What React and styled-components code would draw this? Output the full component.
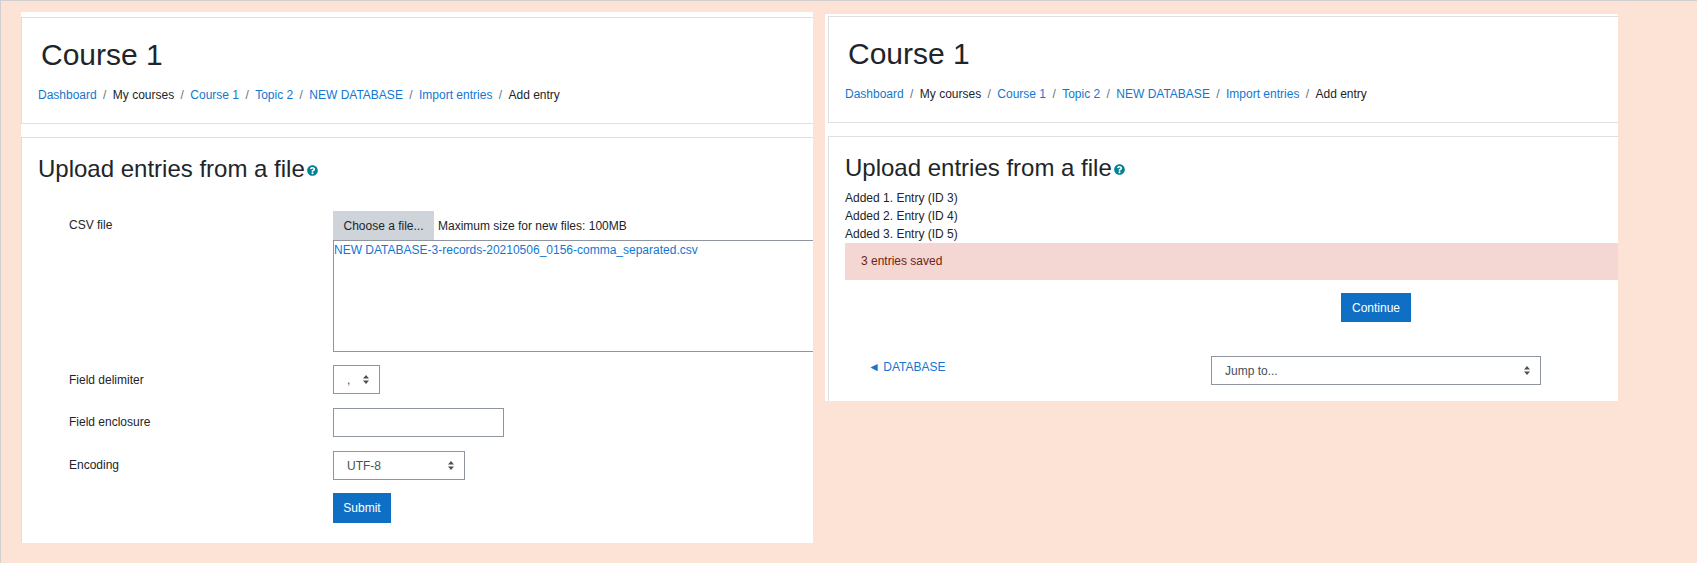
import React from "react";
import styled, { createGlobalStyle } from "styled-components";
import { FaQuestionCircle } from "react-icons/fa";

const GlobalStyle = createGlobalStyle`
  html, body {
    margin: 0;
    padding: 0;
    background: #fff;
  }
  body {
    font-family: "Liberation Sans", Arial, sans-serif;
    font-size: 12px;
    color: #212529;
  }
`;

const Page = styled.div`
  box-sizing: border-box;
  width: 1697px;
  height: 563px;
  display: flex;
  align-items: flex-start;
  padding-left: 20px;
  background: #fde3d5;
  border-top: 1px solid #d0d0d0;
  border-left: 1px solid #d0d0d0;
  overflow: hidden;
`;

const Panel = styled.div`
  flex: none;
  box-sizing: border-box;
  width: ${(p) => p.$width}px;
  margin-top: ${(p) => p.$top}px;
  margin-left: ${(p) => p.$left || 0}px;
  padding-top: ${(p) => p.$padTop}px;
  padding-left: ${(p) => p.$padLeft || 0}px;
  background: #fff;
`;

const Card = styled.section`
  box-sizing: border-box;
  height: ${(p) => p.$height}px;
  border: 1px solid #dfdfdf;
  border-right: 0;
  border-bottom: ${(p) => (p.$open ? "0" : "1px solid #dfdfdf")};
  overflow: hidden;
  & + & {
    margin-top: 13px;
  }
`;

const HeaderInner = styled.div`
  padding: 19px 0 0 16px;
`;

const CourseTitle = styled.h1`
  margin: 0 0 0 3px;
  font-size: 30px;
  font-weight: 400;
  line-height: 36px;
`;

const Crumbs = styled.nav`
  display: flex;
  align-items: center;
  margin-top: 13px;
  font-size: 12px;
  line-height: 18px;
`;

const Crumb = styled.span`
  color: ${(p) => (p.$link ? "#1177d1" : "#212529")};
`;

const Slash = styled.span`
  padding: 0 6.4px;
  color: #6a737b;
`;

const BodyInner = styled.div`
  padding: 16px 0 0 16px;
`;

const Heading = styled.h2`
  display: flex;
  align-items: center;
  margin: 0;
  font-size: 24px;
  font-weight: 400;
  line-height: 29px;
`;

const HelpIcon = styled(FaQuestionCircle)`
  margin: 4px 0 0 2px;
  width: 11px;
  height: 11px;
  color: #008196;
`;

const Form = styled.div`
  margin: 28px 0 0 31px;
`;

const FormRow = styled.div`
  display: grid;
  grid-template-columns: 264px 800px;
  align-items: center;
  margin-top: ${(p) => p.$gap || 0}px;
`;

const Label = styled.label`
  margin-top: ${(p) => p.$drop || 0}px;
  margin-bottom: ${(p) => -(p.$drop || 0)}px;
  line-height: 29px;
  color: #212529;
`;

const Picker = styled.div`
  display: flex;
  align-items: center;
`;

const ChooseButton = styled.button`
  width: 101px;
  height: 29px;
  padding: 0;
  border: 0;
  background: #ced4da;
  color: #212529;
  font: inherit;
`;

const MaxSize = styled.span`
  margin-left: 4px;
`;

const FileBox = styled.div`
  box-sizing: border-box;
  height: 112px;
  border: 1px solid #8f959e;
  color: #1177d1;
  line-height: 18px;
`;

const SelectBox = styled.div`
  box-sizing: border-box;
  display: flex;
  align-items: center;
  justify-content: space-between;
  width: ${(p) => p.$width}px;
  height: 29px;
  padding: 0 10px 0 13px;
  border: 1px solid #8f959e;
  color: #495057;
  background: #fff;
`;

const TextInput = styled.input`
  display: block;
  box-sizing: border-box;
  width: 171px;
  height: 29px;
  border: 1px solid #8f959e;
  background: #fff;
`;

const PrimaryButton = styled.button`
  width: ${(p) => p.$width}px;
  height: ${(p) => p.$height}px;
  padding: 0;
  border: 0;
  background: #0f6fc5;
  color: #fff;
  font: inherit;
`;

const SubmitCell = styled.div`
  grid-column: 2;
`;

const Content = styled.div`
  width: 1062px;
`;

const AddedList = styled.div`
  margin-top: 7px;
`;

const AddedLine = styled.div`
  line-height: 18px;
`;

const Alert = styled.div`
  box-sizing: border-box;
  height: 37px;
  padding: 0 16px;
  background: #f4d6d2;
  color: #6e1f16;
  line-height: 37px;
`;

const ContinueRow = styled.div`
  margin-top: 13px;
  text-align: center;
`;

const BottomNav = styled.div`
  display: grid;
  grid-template-columns: repeat(3, 354px);
  margin-top: 34px;
`;

const BackLink = styled.a`
  padding-left: 23px;
  color: #1177d1;
  line-height: 22px;
`;

const JumpCell = styled.div`
  padding: 0 12px;
`;

function UpDown() {
  return (
    <svg width="6" height="9" viewBox="0 0 6 9">
      <path d="M3 0 6 3.5H0zM3 9 0 5.5h6z" fill="#495057" />
    </svg>
  );
}

const crumbs = [
  ["Dashboard", true],
  ["My courses", false],
  ["Course 1", true],
  ["Topic 2", true],
  ["NEW DATABASE", true],
  ["Import entries", true],
  ["Add entry", false],
];

function PageHeader({ height }) {
  return (
    <Card $height={height}>
      <HeaderInner>
        <CourseTitle>Course 1</CourseTitle>
        <Crumbs>
          {crumbs.map(([text, link], i) => (
            <React.Fragment key={text}>
              {i > 0 && <Slash>/</Slash>}
              <Crumb $link={link}>{text}</Crumb>
            </React.Fragment>
          ))}
        </Crumbs>
      </HeaderInner>
    </Card>
  );
}

function UploadHeading() {
  return (
    <Heading>
      Upload entries from a file
      <HelpIcon />
    </Heading>
  );
}

export default function App() {
  return (
    <>
      <GlobalStyle />
      <Page>
        <Panel $width={792} $top={11} $padTop={5}>
          <PageHeader height={107} />
          <Card $height={406} $open>
            <BodyInner>
              <UploadHeading />
              <Form>
                <FormRow>
                  <Label>CSV file</Label>
                  <Picker>
                    <ChooseButton>Choose a file...</ChooseButton>
                    <MaxSize>Maximum size for new files: 100MB</MaxSize>
                  </Picker>
                </FormRow>
                <FormRow>
                  <span />
                  <FileBox>NEW DATABASE-3-records-20210506_0156-comma_separated.csv</FileBox>
                </FormRow>
                <FormRow $gap={13}>
                  <Label $drop={1}>Field delimiter</Label>
                  <SelectBox $width={47}>
                    ,
                    <UpDown />
                  </SelectBox>
                </FormRow>
                <FormRow $gap={14}>
                  <Label>Field enclosure</Label>
                  <TextInput />
                </FormRow>
                <FormRow $gap={14}>
                  <Label>Encoding</Label>
                  <SelectBox $width={132}>
                    UTF-8
                    <UpDown />
                  </SelectBox>
                </FormRow>
                <FormRow $gap={13}>
                  <SubmitCell>
                    <PrimaryButton $width={58} $height={30}>Submit</PrimaryButton>
                  </SubmitCell>
                </FormRow>
              </Form>
            </BodyInner>
          </Card>
        </Panel>
        <Panel $width={793} $top={13} $left={12} $padTop={2} $padLeft={3}>
          <PageHeader height={107} />
          <Card $height={265} $open>
            <BodyInner>
              <Content>
                <UploadHeading />
                <AddedList>
                  <AddedLine>Added 1. Entry (ID 3)</AddedLine>
                  <AddedLine>Added 2. Entry (ID 4)</AddedLine>
                  <AddedLine>Added 3. Entry (ID 5)</AddedLine>
                </AddedList>
                <Alert>3 entries saved</Alert>
                <ContinueRow>
                  <PrimaryButton $width={70} $height={29}>Continue</PrimaryButton>
                </ContinueRow>
                <BottomNav>
                  <BackLink>◄ DATABASE</BackLink>
                  <JumpCell>
                    <SelectBox $width={330}>
                      Jump to...
                      <UpDown />
                    </SelectBox>
                  </JumpCell>
                </BottomNav>
              </Content>
            </BodyInner>
          </Card>
        </Panel>
      </Page>
    </>
  );
}
